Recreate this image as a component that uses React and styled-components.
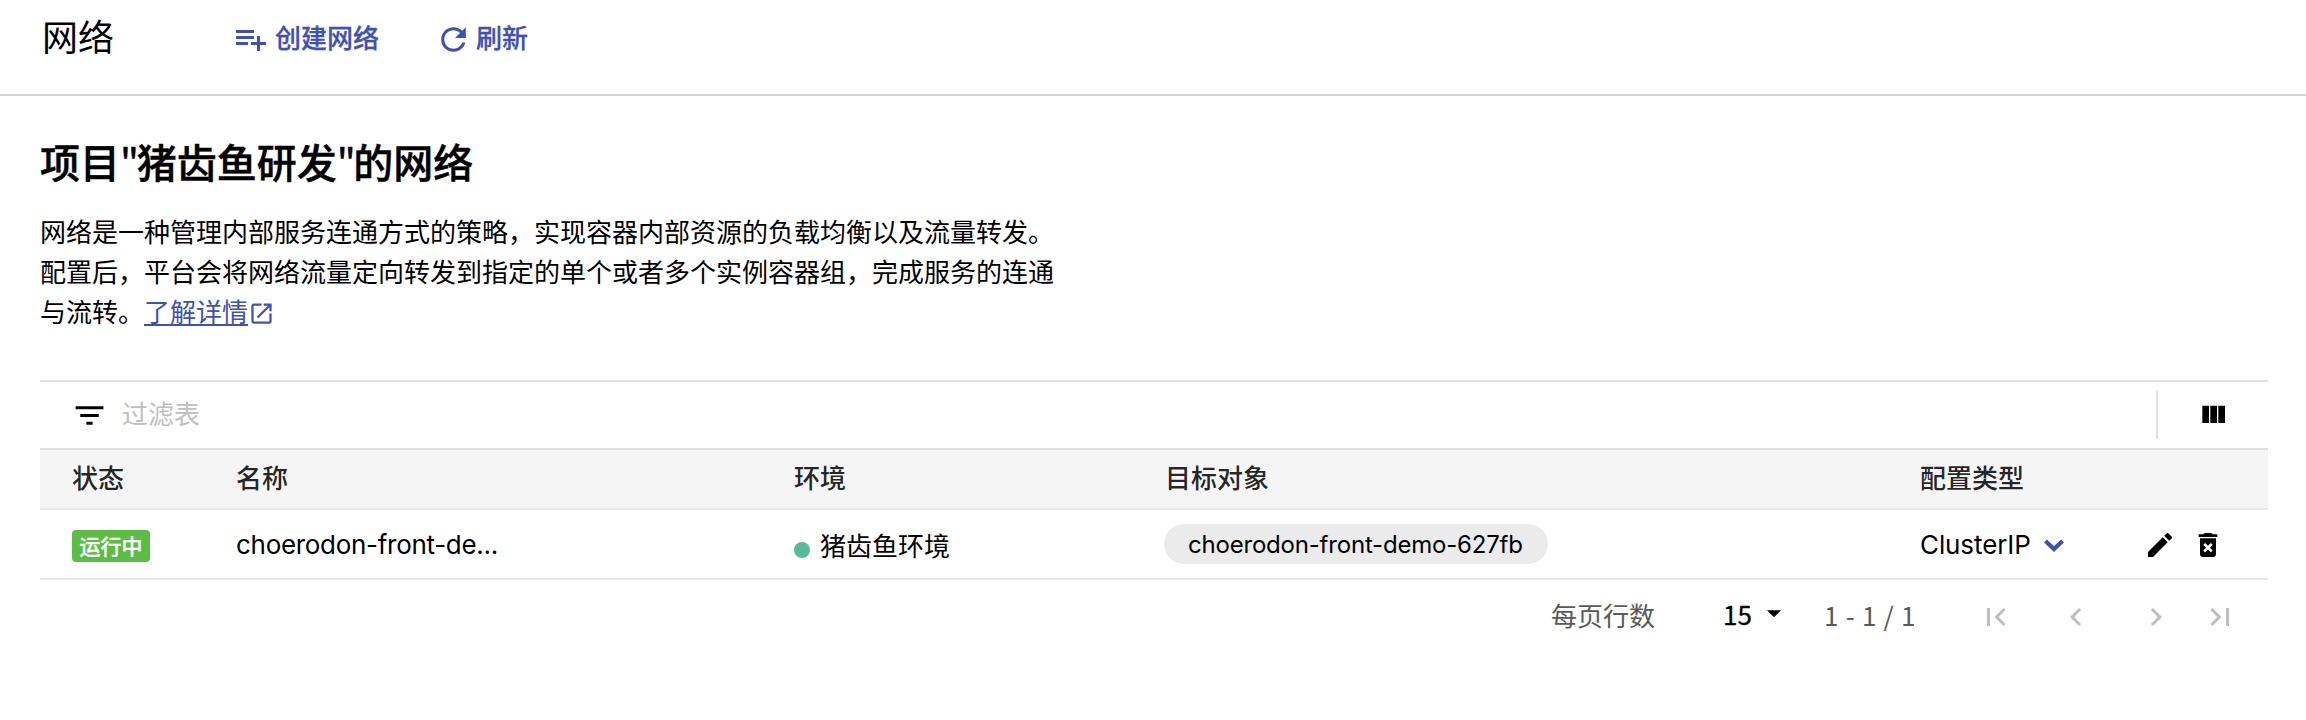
import React from "react";
import styled, { createGlobalStyle } from "styled-components";

const GlobalStyle = createGlobalStyle`
  * { box-sizing: border-box; }
  body {
    margin: 0;
    background: #fff;
    color: #000;
    font-family: "Noto Sans CJK SC", sans-serif;
    font-size: 26px;
    line-height: 40px;
  }
`;

const Page = styled.div`
  width: 2306px;
  height: 720px;
  overflow: hidden;
`;

const Header = styled.header`
  height: 96px;
  padding: 0 42px 18px;
  border-bottom: 2px solid #d3d3d3;
  display: flex;
  align-items: center;
`;

const Title = styled.h1`
  margin: 0;
  width: 191px;
  padding-bottom: 7px;
  font-size: 36px;
  font-weight: 400;
`;

const HeaderButton = styled.button`
  display: flex;
  align-items: center;
  gap: ${(p) => p.$gap}px;
  margin: 2px ${(p) => p.$after || 0}px 0 0;
  padding: 0;
  border: 0;
  background: none;
  color: #3f51b5;
  font: inherit;
  font-weight: 500;
  -webkit-text-stroke: 0.3px currentColor;
`;

const Label = styled.span`
  padding-bottom: 4px;
`;

const Icon = styled.svg`
  display: block;
  flex: none;
  width: ${(p) => p.$size}px;
  height: ${(p) => p.$size}px;
  fill: currentColor;
`;

const Content = styled.main`
  padding: 41px 38px 0 40px;
`;

const Heading = styled.h2`
  margin: 0;
  font-size: 40px;
  line-height: 48px;
  font-weight: 500;
  -webkit-text-stroke: 0.5px currentColor;
`;

const Quote = styled.span`
  font-weight: 400;
  letter-spacing: -2.3px;
`;

const Description = styled.p`
  margin: 26px 0 49px;
  width: 1020px;
`;

const DetailLink = styled.a`
  color: #3f51b5;
  svg { display: inline-block; vertical-align: -5px; }
`;

const LinkText = styled.span`
  text-decoration: underline;
  text-decoration-thickness: 2px;
  text-underline-offset: 2px;
`;

const FilterBar = styled.div`
  height: 68px;
  border-top: 2px solid #e0e0e0;
  display: flex;
  align-items: center;
  padding-left: 31px;
`;

const Placeholder = styled.span`
  flex: 1;
  margin-left: 14px;
  padding-bottom: 4px;
  color: #bfbfbf;
`;

const ColumnToggle = styled.div`
  width: 112px;
  height: 48px;
  border-left: 2px solid #e0e0e0;
  display: flex;
  align-items: center;
  padding-left: 39px;
`;

const Row = styled.div`
  display: grid;
  grid-template-columns: 164px 558px 371px 755px 1fr;
  align-items: center;
  height: 70px;
  padding: 2px 0 0 32px;
  border-bottom: 2px solid #e8e8e8;
`;

const HeadRow = styled(Row)`
  height: 62px;
  padding: 0 0 4px 32px;
  border-top: 2px solid #e0e0e0;
  background: #f5f5f5;
  color: rgba(0, 0, 0, 0.87);
  font-weight: 500;
`;

const Status = styled.span`
  display: block;
  width: 78px;
  height: 32px;
  margin-top: 2px;
  border-radius: 4px;
  background: #5bbd43;
  color: #fff;
  font-size: 21px;
  line-height: 30px;
  font-weight: 500;
  text-align: center;
  -webkit-text-stroke: 0.3px currentColor;
`;

const Latin = styled.span`
  font-family: Inter, "Noto Sans CJK SC", sans-serif;
  letter-spacing: ${(p) => p.$track || 0}px;
`;

const Environment = styled.div`
  display: flex;
  align-items: center;
  gap: 10px;
`;

const Dot = styled.i`
  width: 16px;
  height: 16px;
  margin-top: 10px;
  border-radius: 50%;
  background: #57bb97;
`;

const Chip = styled.div`
  width: 384px;
  height: 40px;
  border-radius: 20px;
  background: #ebebeb;
  padding-left: 24px;
  margin: 0 0 2px -1px;
  font-size: 24px;
  line-height: 37px;
  white-space: nowrap;
`;

const TypeCell = styled.div`
  display: flex;
  align-items: center;
`;

const Chevron = styled.svg`
  width: 20px;
  height: 13px;
  margin-left: 13px;
  fill: none;
  stroke: #3f51b5;
  stroke-width: 4.2;
`;

const Actions = styled.div`
  display: flex;
  gap: 16px;
  margin-left: auto;
  padding-right: 44px;
`;

const Pagination = styled.nav`
  height: 74px;
  display: flex;
  align-items: center;
  justify-content: flex-end;
  padding-right: 30px;
  color: #595959;
`;

const PageSize = styled.div`
  display: flex;
  align-items: center;
  width: 101px;
  margin-left: 68px;
  padding-bottom: 7px;
  color: #000;
  -webkit-text-stroke: 0.3px currentColor;
`;

const Caret = styled(Icon)`
  margin: -1px 0 0 5px;
`;

const Range = styled.span`
  width: 154px;
  padding-bottom: 4px;
  letter-spacing: 0.7px;
`;

const Pagers = styled.div`
  display: flex;
  gap: 44px;
  color: #bfbfbf;

  svg:last-child { margin-left: -16px; }
`;

const paths = {
  add: "M14 10H2v2h12v-2zm0-4H2v2h12V6zm4 8v-4h-2v4h-4v2h4v4h2v-4h4v-2h-4zM2 16h8v-2H2v2z",
  refresh: "M17.65 6.35C16.2 4.9 14.21 4 12 4c-4.42 0-7.99 3.58-7.99 8s3.57 8 7.99 8c3.73 0 6.84-2.55 7.73-6h-2.08c-.82 2.33-3.04 4-5.65 4-3.31 0-6-2.69-6-6s2.69-6 6-6c1.66 0 3.14.69 4.22 1.78L13 11h7V4l-2.35 2.35z",
  open: "M19 19H5V5h7V3H5c-1.11 0-2 .9-2 2v14c0 1.1.89 2 2 2h14c1.1 0 2-.9 2-2v-7h-2v7zM14 3v2h3.59l-9.83 9.83 1.41 1.41L19 6.41V10h2V3h-7z",
  filter: "M10 18h4v-2h-4v2zM3 6v2h18V6H3zm3 7h12v-2H6v2z",
  columns: "M10 18h5V5h-5v13zm-6 0h5V5H4v13zM16 5v13h5V5h-5z",
  edit: "M3 17.25V21h3.75L17.81 9.94l-3.75-3.75L3 17.25zM20.71 7.04c.39-.39.39-1.02 0-1.41l-2.34-2.34c-.39-.39-1.02-.39-1.41 0l-1.83 1.83 3.75 3.75 1.83-1.83z",
  remove: "M6 19c0 1.1.9 2 2 2h8c1.1 0 2-.9 2-2V7H6v12zm2.46-7.12l1.41-1.41L12 12.59l2.12-2.12 1.41 1.41L13.41 14l2.12 2.12-1.41 1.41L12 15.41l-2.12 2.12-1.41-1.41L10.59 14l-2.13-2.12zM15.5 4l-1-1h-5l-1 1H5v2h14V4z",
  caret: "M7 10l5 5 5-5z",
  first: "M18.41 16.59L13.82 12l4.59-4.59L17 6l-6 6 6 6zM6 6h2v12H6z",
  prev: "M15.41 7.41L14 6l-6 6 6 6 1.41-1.41L10.83 12z",
  next: "M10 6L8.59 7.41 13.17 12l-4.58 4.59L10 18l6-6z",
  last: "M5.59 7.41L10.18 12l-4.59 4.59L7 18l6-6-6-6zM16 6h2v12h-2z",
};

const Glyph = ({ name, size = 32, as: Shape = Icon }) => (
  <Shape $size={size} viewBox="0 0 24 24" aria-hidden="true">
    <path d={paths[name]} />
  </Shape>
);

export default function App() {
  return (
    <Page>
      <GlobalStyle />
      <Header>
        <Title>网络</Title>
        <HeaderButton $gap={6} $after={56}>
          <Glyph name="add" size={36} />
          <Label>创建网络</Label>
        </HeaderButton>
        <HeaderButton $gap={4}>
          <Glyph name="refresh" size={37} />
          <Label>刷新</Label>
        </HeaderButton>
      </Header>
      <Content>
        <Heading>
          项目<Quote>"</Quote>猪齿鱼研发<Quote>"</Quote>的网络
        </Heading>
        <Description>
          网络是一种管理内部服务连通方式的策略，实现容器内部资源的负载均衡以及流量转发。配置后，平台会将网络流量定向转发到指定的单个或者多个实例容器组，完成服务的连通与流转。
          <DetailLink>
            <LinkText>了解详情</LinkText>
            <Glyph name="open" size={27} />
          </DetailLink>
        </Description>
        <FilterBar>
          <Glyph name="filter" size={37} />
          <Placeholder>过滤表</Placeholder>
          <ColumnToggle>
            <Glyph name="columns" size={32} />
          </ColumnToggle>
        </FilterBar>
        <HeadRow>
          <span>状态</span>
          <span>名称</span>
          <span>环境</span>
          <span>目标对象</span>
          <span>配置类型</span>
        </HeadRow>
        <Row>
          <Status>运行中</Status>
          <Latin $track={-0.3}>choerodon-front-de...</Latin>
          <Environment>
            <Dot />
            猪齿鱼环境
          </Environment>
          <Chip>
            <Latin $track={-0.2}>choerodon-front-demo-627fb</Latin>
          </Chip>
          <TypeCell>
            <Latin $track={-0.1}>ClusterIP</Latin>
            <Chevron viewBox="0 0 20 13" aria-hidden="true">
              <path d="M1.5 2l8.5 8 8.5-8" />
            </Chevron>
            <Actions>
              <Glyph name="edit" />
              <Glyph name="remove" />
            </Actions>
          </TypeCell>
        </Row>
        <Pagination>
          <Label>每页行数</Label>
          <PageSize>
            <span>15</span>
            <Glyph name="caret" size={34} as={Caret} />
          </PageSize>
          <Range>1 - 1 / 1</Range>
          <Pagers>
            <Glyph name="first" size={36} />
            <Glyph name="prev" size={36} />
            <Glyph name="next" size={36} />
            <Glyph name="last" size={36} />
          </Pagers>
        </Pagination>
      </Content>
    </Page>
  );
}
